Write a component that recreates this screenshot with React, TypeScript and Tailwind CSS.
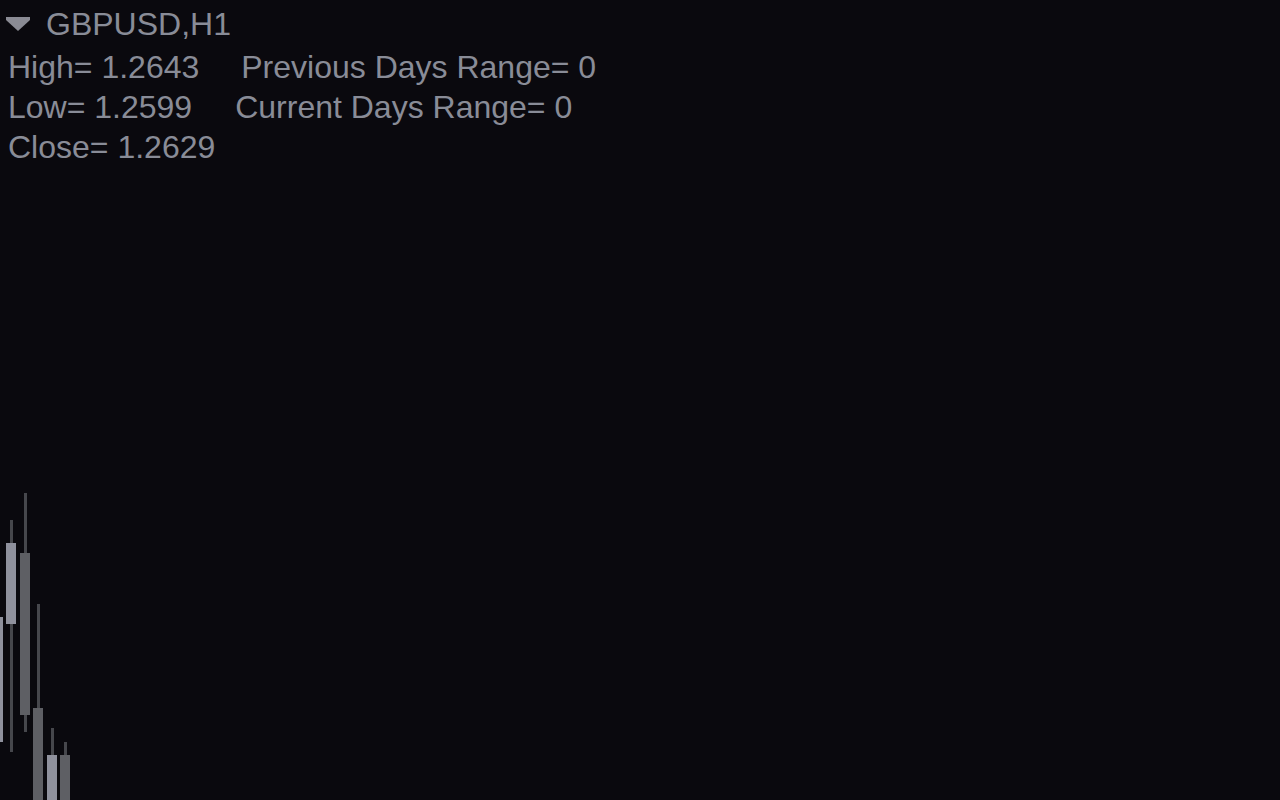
import * as React from "react";

type Candle = {
  x: number;
  wickTop: number;
  wickBottom: number;
  bodyTop: number;
  bodyBottom: number;
  up: boolean;
};

// chart coordinates are relative to the svg (top = page y 480)
const candles: Candle[] = [
  { x: -7, wickTop: 130, wickBottom: 270, bodyTop: 137, bodyBottom: 262, up: true },
  { x: 6, wickTop: 40, wickBottom: 272, bodyTop: 63, bodyBottom: 144, up: true },
  { x: 20, wickTop: 13, wickBottom: 252, bodyTop: 73, bodyBottom: 235, up: false },
  { x: 33, wickTop: 124, wickBottom: 320, bodyTop: 228, bodyBottom: 320, up: false },
  { x: 47, wickTop: 248, wickBottom: 320, bodyTop: 275, bodyBottom: 320, up: true },
  { x: 60, wickTop: 262, wickBottom: 320, bodyTop: 275, bodyBottom: 320, up: false },
];

const CandleChart = () => (
  <svg width="80" height="320" viewBox="0 0 80 320" className="block">
    {candles.map((c, i) => (
      <g key={i}>
        <rect x={c.x + 4} y={c.wickTop} width="3" height={c.wickBottom - c.wickTop} fill="#46474c" />
        <rect
          x={c.x}
          y={c.bodyTop}
          width="10"
          height={c.bodyBottom - c.bodyTop}
          fill={c.up ? "#8f919d" : "#5e5f64"}
        />
      </g>
    ))}
  </svg>
);

export default function App() {
  return (
    <div
      className="flex h-[800px] w-full flex-col overflow-hidden bg-[#0a090e] text-[32px] leading-[40px] text-[#898c97]"
      style={{ fontFamily: '"Liberation Sans", Arial, sans-serif' }}
    >
      {/* Header */}
      <div className="flex items-center pt-1">
        <svg width="24" height="14" viewBox="0 0 24 14" className="ml-[6px]">
          <polygon points="0,0 24,0 24,3 12,14 0,3" fill="#8a8b94" />
        </svg>
        <span className="ml-[16px]">GBPUSD,H1</span>
      </div>

      {/* Info rows */}
      <div className="mt-[3px] flex flex-col pl-2">
        <div className="flex whitespace-pre">
          <span>High= 1.2643</span>
          <span className="ml-[42px]">Previous Days Range= 0</span>
        </div>
        <div className="flex whitespace-pre">
          <span>Low= 1.2599</span>
          <span className="ml-[43px]">Current Days Range= 0</span>
        </div>
        <div className="flex whitespace-pre">
          <span>Close= 1.2629</span>
        </div>
      </div>

      <div className="mt-auto">
        <CandleChart />
      </div>
    </div>
  );
}
